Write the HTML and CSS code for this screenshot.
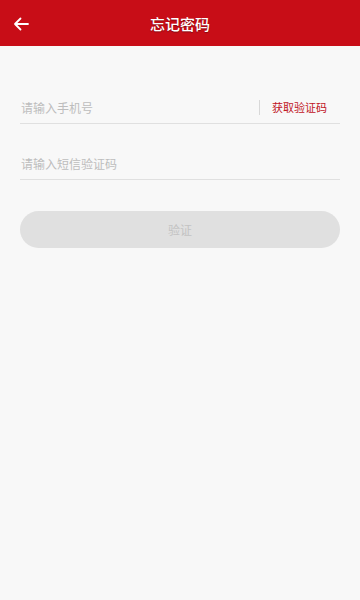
FILE: index.html
```html
<!DOCTYPE html>
<html lang="zh">
<head>
<meta charset="utf-8">
<link rel="stylesheet" href="styles.css">
</head>
<body>
<div class="page">
  <header class="bar">
    <svg class="back" width="16" height="14" viewBox="0 0 16 14"><path d="M15 7H2M7.5 1.5L2 7l5.5 5.5" fill="none" stroke="#fff" stroke-width="1.8" stroke-linecap="round" stroke-linejoin="round"/></svg>
    <h1 class="title">忘记密码</h1>
  </header>
  <main class="form">
    <div class="field first">
      <span class="ph">请输入手机号</span>
      <span class="sep"></span>
      <span class="code">获取验证码</span>
    </div>
    <div class="field">
      <span class="ph">请输入短信验证码</span>
    </div>
    <div class="btn">验证</div>
  </main>
</div>
</body>
</html>
```
FILE: styles.css
```css
html, body { margin: 0; padding: 0; }
body {
  width: 360px; height: 600px; overflow: hidden;
  background: #f8f8f8;
  font-family: "Noto Sans CJK SC", "Noto Sans", sans-serif;
}
.page { height: 600px; display: flex; flex-direction: column; }
.bar {
  height: 46px; background: #c80d17;
  display: flex; align-items: center; justify-content: center;
  position: relative;
}
.back { position: absolute; left: 13px; top: 17px; }
.title {
  margin: 0; color: #fff; font-size: 15px; font-weight: 500;
  text-shadow: 0 1px 1px rgba(0,0,0,0.35);
}
.form { padding: 0 20px; display: flex; flex-direction: column; }
.field {
  height: 32px; margin-top: 21px;
  border-bottom: 1px solid #e0e0e0;
  display: flex; align-items: center; padding-top: 2px;
}
.field.first { margin-top: 43px; }
.ph { color: #bdbdbd; font-size: 12px; flex: 1; padding-left: 1px; }
.sep { width: 1px; height: 15px; background: #d8d8d8; margin-right: 12px; }
.code { color: #c0141e; font-size: 11px; margin-right: 13px; }
.btn {
  margin-top: 31px; height: 37px; border-radius: 19px;
  background: #e0e0e0; color: #c3c3c3; font-size: 12px;
  display: flex; align-items: center; justify-content: center;
}
```
